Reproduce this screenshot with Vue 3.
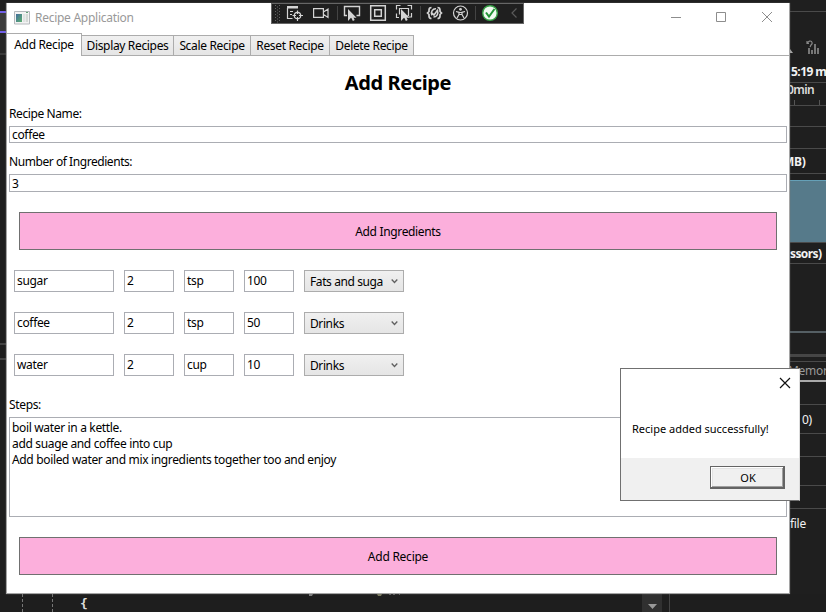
<script setup>
import { ref } from 'vue'

const tabs = [
  { label: 'Add Recipe', width: 75 },
  { label: 'Display Recipes', width: 92 },
  { label: 'Scale Recipe', width: 77 },
  { label: 'Reset Recipe', width: 79 },
  { label: 'Delete Recipe', width: 84 },
]
const active = ref(0)
const ingredients = [
  { name: 'sugar', qty: '2', unit: 'tsp', calories: '100', group: 'Fats and suga' },
  { name: 'coffee', qty: '2', unit: 'tsp', calories: '50', group: 'Drinks' },
  { name: 'water', qty: '2', unit: 'cup', calories: '10', group: 'Drinks' },
]
const steps = ['boil water in a kettle.', 'add suage and coffee into cup', 'Add boiled water and mix ingredients together too and enjoy']
</script>

<template>
  <div class="desktop">
    <div class="editor-edge">
      <div class="edge-top"></div>
      <div class="edge-tab"></div>
      <div class="edge-sub"></div>
      <div class="edge-space"></div>
      <div class="edge-split"></div>
    </div>

    <div class="code">
      <span class="guide"></span>
      <span class="guide second"></span>
      <span class="brace">{</span>
      <svg class="descenders" width="94" height="3" viewBox="0 0 94 3"><path d="M1 .5h4l-1 1H1z" fill="#ddd" /><path d="M69 .5h5l-1 1h-3z" fill="#d8d8a0" /><path d="M81 .5h2M85 .5h2M91 .5h1" stroke="#666" /></svg>
      <span class="scroll"><svg width="9" height="5" viewBox="0 0 9 5"><path d="M0 0h9L4.500 5z" fill="#999" /></svg></span>
    </div>

    <div class="diagnostics">
      <div class="d-row r-top"></div>
      <div class="d-row r-icons">
        <svg width="36" height="50" viewBox="790 12 36 50">
          <path d="M790 49l3 4h-3z" fill="#aaa" />
          <g fill="#777"><path d="M808 48h2v6h-2zM811 50h2v4h-2zM814 44h2v10h-2zM817 48h2v6h-2z" /></g>
          <path d="M807 41v2.500h2M807.500 43q2-3 4-1.500q1.500 2-.5 3.500l-1 2" fill="none" stroke="#888" stroke-width="1.200" />
        </svg>
      </div>
      <div class="d-row r-session"><b>5:19 m</b></div>
      <div class="d-row r-ruler"><b>0min</b><i></i><i class="tick2"></i></div>
      <div class="d-row r-a"></div>
      <div class="d-row r-b"></div>
      <div class="d-row r-mb"><b>MB)</b></div>
      <div class="d-row r-gap"></div>
      <div class="d-row r-chart"></div>
      <div class="d-row r-proc"><b>ssors)</b></div>
      <div class="d-row r-cpu"></div>
      <div class="d-row r-c"></div>
      <div class="d-row r-d"></div>
      <div class="d-row r-memory"><span>Memor</span></div>
      <div class="d-row r-e"></div>
      <div class="d-row r-zero"><span>0)</span></div>
      <div class="d-row r-f"></div>
      <div class="d-row r-g"></div>
      <div class="d-row r-h"></div>
      <div class="d-row r-file"><span>file</span></div>
    </div>

    <main class="window">
      <header class="titlebar">
        <svg class="app-icon" width="16" height="14" viewBox="0 0 16 14">
          <defs><linearGradient id="icon-fill" x2="1" y2="1"><stop stop-color="#426e9c" /><stop offset="1" stop-color="#5db071" /></linearGradient></defs>
          <path d="M.5.500h15v12.500H.5z" fill="#f3f3f3" stroke="#b5b9bd" />
          <path d="M2 3h6v8H2z" fill="url(#icon-fill)" /><path d="M9 3h2.500v8H9z" fill="#e0e3e2" /><path d="M12 3h2v8h-2z" fill="#d5dad7" />
          <path d="M12 1.500h2" stroke="#62a276" />
        </svg>
        <span class="caption">Recipe Application</span>
        <svg class="controls" width="106" height="14" viewBox="0 0 106 14" fill="none" stroke="#8d8d8d">
          <path d="M1 7.500h10M46.500 2.500h9v9h-9zM92 2l10 10M102 2L92 12" />
        </svg>
      </header>

      <nav class="tabs">
        <button v-for="(tab, i) in tabs" :key="tab.label" class="tab" :class="{ active: i === active }" :style="{ width: tab.width + 'px' }" @click="active = i">{{ tab.label }}</button>
        <span class="tab-line"></span>
      </nav>

      <section class="form">
        <h1>Add Recipe</h1>
        <label class="lbl-name">Recipe Name:</label>
        <div class="field">coffee</div>
        <label class="lbl-count">Number of Ingredients:</label>
        <div class="field count">3</div>
        <button class="pink first">Add Ingredients</button>
        <div class="ingredients">
          <div v-for="item in ingredients" :key="item.name" class="ingredient">
            <div class="box wide">{{ item.name }}</div>
            <div class="box">{{ item.qty }}</div>
            <div class="box">{{ item.unit }}</div>
            <div class="box">{{ item.calories }}</div>
            <div class="select">
              <span>{{ item.group }}</span>
              <svg width="7" height="5" viewBox="0 0 7 5"><path d="M.7.500l2.800 3 2.800-3" fill="none" stroke="#606060" stroke-width="1.300" /></svg>
            </div>
          </div>
        </div>
        <label class="lbl-steps">Steps:</label>
        <div class="area"><p v-for="(s, i) in steps" :key="i">{{ s }}</p></div>
        <button class="pink last">Add Recipe</button>
      </section>
    </main>

    <div class="debugbar">
      <svg width="251" height="19" viewBox="272 4 251 19" fill="none" stroke="#d4d4d4" stroke-width="1.200">
        <g stroke="#626262" stroke-width="1" stroke-dasharray="1 2"><path d="M275.500 5v17M279.500 5v17" /><path d="M277.500 6.500v16" /></g>
        <path d="M287 6h11v2.500h-11z" fill="#d4d4d4" stroke="none" />
        <path d="M287.500 8v10.500h5M290 11.500h3M290 14.500h2" />
        <circle cx="297.500" cy="15.500" r="3.200" /><path d="M297.500 10.500v3.500M297.500 17v4M292.500 15.500h3.500M299 15.500h4" />
        <path d="M313.600 8.600h9.800v8.800h-9.800zM323.500 12l4.500-3v8.500l-4.500-3" />
        <path d="M337.500 6v14M420.500 6v14M475.500 6v14" stroke="#444" stroke-width="1" />
        <path d="M347 15.500h-2.500v-9h15v9h-3" stroke-width="1.400" />
        <path d="M348 9v12l3-3.200h5.500z" fill="#d4d4d4" stroke="none" /><path d="M351.500 16l2.300 4.500" stroke-width="2" />
        <path d="M370.700 5.700h14.600v14.600h-14.600zM374.700 9.700h6.600v6.600h-6.600z" stroke-width="1.500" />
        <path d="M396.500 9.500v-4h4M407.500 5.500h4v4M411.500 13v4h-3M399 17.500h-2.500v-4M399.500 14.500v-6h9v7h-1" />
        <path d="M401 9v12l3-3.200h5.500z" fill="#d4d4d4" stroke="none" /><path d="M404.500 16l2.300 4.500" stroke-width="2" />
        <path d="M431.500 7.500q-2.500 0-2.500 2.500v1.500l-1.500 1.500 1.500 1.500v1.500q0 2.500 2.500 2.500M437.500 7.500q2.500 0 2.500 2.500v1.500l1.500 1.500-1.500 1.500v1.500q0 2.500-2.500 2.500" stroke-width="1.700" />
        <path d="M436 8.800a4.300 4.300 0 0 0-4 6.500M433.500 17a4.300 4.300 0 0 0 4-6M432 13l2 2 4-5.500" stroke-width="1.600" />
        <circle cx="460.500" cy="13" r="7" /><circle cx="460.500" cy="9.300" r="1.400" fill="#d4d4d4" stroke="none" />
        <path d="M456 11.500l3 .8v2.200l-2 3.500M465 11.500l-3 .8v2.200l2 3.500M459 12.500h3M459 14.500h3" />
        <circle cx="490" cy="13" r="7.300" fill="#f1faf2" stroke="#39a348" stroke-width="1.400" /><path d="M486 12.500l3 4 5.500-7.500" stroke="#239437" stroke-width="2" />
        <path d="M516.500 8.500l-4.500 4.500 4.500 4.500" stroke="#5a5a5a" />
      </svg>
    </div>

    <aside class="dialog" role="dialog">
      <div class="dialog-body">
        <svg class="close" width="12" height="12" viewBox="0 0 12 12"><path d="M1 1l10 10M11 1L1 11" stroke="#111" stroke-width="1.200" /></svg>
        <p>Recipe added successfully!</p>
      </div>
      <footer><button class="ok">OK</button></footer>
    </aside>
  </div>
</template>

<style>
body { margin: 0; background: #1f1f1f; }
</style>
<style scoped>
* { box-sizing: border-box; }
button { font: inherit; color: inherit; padding: 0; margin: 0; border-radius: 0; letter-spacing: inherit; }
p, h1 { margin: 0; }
.desktop { position: relative; width: 826px; height: 612px; overflow: hidden; background: #1f1f1f; font: 12px/16px "Noto Sans", "Open Sans", sans-serif; color: #000; white-space: nowrap; letter-spacing: -.34px; }
.editor-edge { display: flex; flex-direction: column; width: 6px; height: 594px; }
.edge-top { height: 11px; }
.edge-tab { height: 22px; background: #3c3c3c; border: solid #7160e8; border-width: 2px 0; }
.edge-sub { height: 22px; background: #252525; border-bottom: 2px solid #3a3a3a; }
.edge-space { height: 288px; }
.edge-split { height: 17px; border: solid #444; border-width: 2px 0; }
.code { display: flex; height: 18px; padding-left: 22px; color: #dcdcdc; background: #1e1e1e; overflow: hidden; }
.code::after { content: ""; width: 7px; border-right: 1px solid #444; }
.guide { width: 30px; border-left: 1px dashed #777; }
.guide.second { width: 28px; }
.brace { width: 228px; font: bold 13px/20px "DejaVu Sans Mono", monospace; }
.descenders { margin: 0 240px 0 0; }
.scroll { display: flex; flex: none; justify-content: center; width: 20px; padding-top: 10px; background: #303030; }

.diagnostics { position: absolute; left: 789px; top: 0; width: 37px; height: 612px; display: flex; flex-direction: column; color: #f2f2f2; letter-spacing: -.3px; }
.d-row { flex: none; border-bottom: 1px solid #4a4a4a; }
.r-top { height: 12px; }
.r-icons { height: 51px; border: 0; padding-left: 1px; }
.r-session { height: 20px; padding: 1px 0 0 2px; letter-spacing: -.55px; }
.r-ruler { position: relative; height: 23px; color: #ddd; letter-spacing: -.6px; }
.r-ruler b { display: block; margin-left: -2px; line-height: 13px; font-weight: 600; }
.r-ruler i { position: absolute; bottom: 0; left: 5px; width: 1px; height: 5px; background: #555; }
.r-ruler .tick2 { left: 30px; }
.r-a { height: 21px; }
.r-b { height: 22px; }
.r-mb { height: 25px; padding-top: 5px; }
.r-mb b { margin-left: -6px; }
.r-gap { height: 7px; border-bottom-color: #65a0b7; }
.r-chart { height: 62px; background: #567a8a; }
.r-proc { height: 21px; padding: 3px 0 0 1px; letter-spacing: -.6px; }
.r-cpu { height: 69px; border-bottom: 2px solid #555f64; }
.r-c { height: 24px; border-bottom: 3px solid #464646; }
.r-d { height: 5px; }
.r-memory { height: 20px; padding: 1px 0 0; color: #999; border-bottom: 2px solid #aaa; }
.r-memory span { margin-left: -1px; }
.r-e { height: 23px; }
.r-zero { height: 29px; padding: 7px 0 0 13px; }
.r-f { height: 23px; }
.r-g { height: 29px; }
.r-h { height: 23px; }
.r-file { height: 40px; border: 0; padding: 7px 0 0 1px; }

.window { position: absolute; left: 6px; top: 3px; width: 784px; height: 591px; background: #fff; border: 1px solid #a5a5a5; border-top: 0; box-shadow: 0 0 1px #777; }
.titlebar { display: flex; align-items: center; height: 29px; padding: 0 13px 0 7px; color: #999; }
.caption { margin-left: 5px; letter-spacing: -.27px; }
.controls { margin-left: auto; margin-top: -1px; }
.tabs { display: flex; align-items: flex-end; height: 24px; }
.tab { flex: none; height: 21px; border: 1px solid #acacac; border-left: 0; background: linear-gradient(#f0f0f0, #e5e5e5); line-height: 19px; }
.tab.active { height: 23px; border-bottom: 0; background: #fff; padding-bottom: 1px; }
.tab-line { flex: 1; border-bottom: 1px solid #acacac; }
.form { display: flex; flex-direction: column; padding: 0 2px; }
h1 { height: 50px; padding-top: 13px; text-align: center; font-size: 20px; line-height: 27px; letter-spacing: -.4px; }
.field { height: 17px; border: 1px solid #abadb3; padding-left: 2px; line-height: 16px; }
.field.count { height: 18px; line-height: 17px; }
.lbl-name { height: 20px; letter-spacing: -.4px; }
.lbl-count { height: 31px; padding-top: 11px; letter-spacing: -.44px; }
.pink { margin: 20px 10px 0; height: 38px; padding-top: 2px; border: 1px solid #707070; background: #fcafdc; }
.pink.last { letter-spacing: -.25px; }
.ingredients { display: flex; flex-direction: column; gap: 20px; margin: 20px 5px 0; }
.ingredient { display: flex; gap: 10px; }
.box { width: 50px; height: 22px; border: 1px solid #abadb3; padding-left: 2px; line-height: 19px; }
.box.wide { width: 100px; }
.select { display: flex; align-items: center; justify-content: space-between; width: 100px; height: 22px; padding: 0 5px; border: 1px solid #acacac; background: linear-gradient(#f0f0f0, #e5e5e5); letter-spacing: -.4px; }
.select span { padding-top: 2px; }
.lbl-steps { height: 41px; padding-top: 21px; }
.area { height: 100px; border: 1px solid #abadb3; padding: 2px; }

.debugbar { position: absolute; left: 271px; top: 3px; width: 253px; height: 21px; border: 1px solid #666; background: #1f1f1f; }
.debugbar svg, .titlebar svg { display: block; }
.dialog { position: absolute; left: 620px; top: 368px; width: 180px; height: 133px; border: 1px solid #707070; border-right-color: #ddd; background: #fff; font-size: 11px; letter-spacing: 0; }
.dialog-body { display: flex; flex-direction: column; height: 89px; }
.close { align-self: flex-end; margin: 8px 8px 0 0; }
.dialog-body p { margin: 32px 0 0 11px; }
footer { display: flex; justify-content: flex-end; height: 42px; padding: 8px 14px 0; background: #f0f0f0; }
.ok { width: 75px; height: 23px; padding: 2px 0 0 2px; border: 1px solid #646464; border-right-width: 2px; border-bottom-width: 2px; background: #f0f0f0; box-shadow: inset 1px 1px #fff, inset -1px -1px #a0a0a0, inset 2px 2px #e3e3e3; }
</style>
